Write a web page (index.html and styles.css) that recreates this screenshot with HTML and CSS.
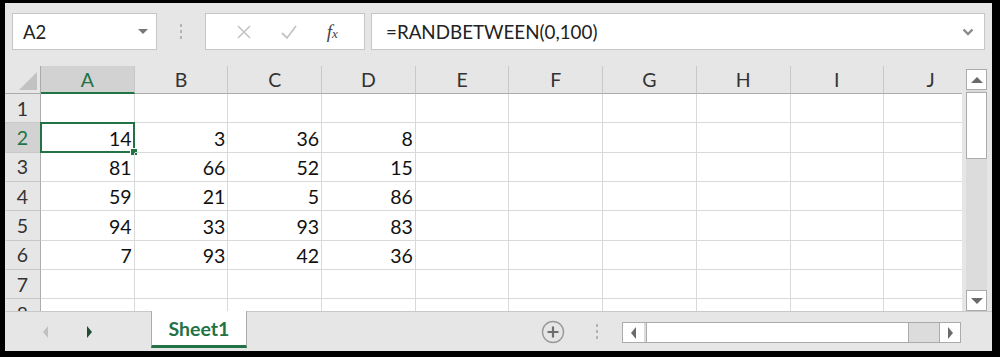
FILE: index.html
```html
<!DOCTYPE html>
<html lang="en">
<head>
  <meta charset="UTF-8">
  <title>Sheet1</title>
  <link rel="stylesheet" href="styles.css">
</head>
<body>
  <div class="frame">
    <!-- formula bar -->
    <div class="formula-bar">
      <div class="name-box">
        <span class="name">A2</span>
        <span class="drop"></span>
      </div>
      <div class="grip"><i></i><i></i><i></i></div>
      <div class="fx-box">
        <svg width="16" height="16" viewBox="0 0 16 16"><path d="M2 2 L14 14 M14 2 L2 14" stroke="#c4c4c4" stroke-width="1.6" fill="none"/></svg>
        <svg width="18" height="16" viewBox="0 0 18 16"><path d="M2 9 L7 14 L16 2" stroke="#c4c4c4" stroke-width="1.8" fill="none"/></svg>
        <span class="fx">f<sub>x</sub></span>
      </div>
      <div class="formula">
        <span>=RANDBETWEEN(0,100)</span>
        <svg width="12" height="8" viewBox="0 0 12 8"><path d="M1.5 1.5 L6 6 L10.5 1.5" stroke="#8a8a8a" stroke-width="2.4" fill="none"/></svg>
      </div>
    </div>

    <!-- grid + vertical scrollbar -->
    <div class="grid-area">
      <div class="sheet">
        <div class="corner"><span class="tri"></span></div>
        <div class="col-head sel">A</div>
        <div class="col-head">B</div>
        <div class="col-head">C</div>
        <div class="col-head">D</div>
        <div class="col-head">E</div>
        <div class="col-head">F</div>
        <div class="col-head">G</div>
        <div class="col-head">H</div>
        <div class="col-head">I</div>
        <div class="col-head">J</div>

        <div class="row-head">1</div>
        <div class="cell"></div><div class="cell"></div><div class="cell"></div><div class="cell"></div><div class="cell"></div><div class="cell"></div><div class="cell"></div><div class="cell"></div><div class="cell"></div><div class="cell"></div>

        <div class="row-head sel">2</div>
        <div class="cell active">14<span class="handle"></span></div><div class="cell">3</div><div class="cell">36</div><div class="cell">8</div><div class="cell"></div><div class="cell"></div><div class="cell"></div><div class="cell"></div><div class="cell"></div><div class="cell"></div>

        <div class="row-head">3</div>
        <div class="cell">81</div><div class="cell">66</div><div class="cell">52</div><div class="cell">15</div><div class="cell"></div><div class="cell"></div><div class="cell"></div><div class="cell"></div><div class="cell"></div><div class="cell"></div>

        <div class="row-head">4</div>
        <div class="cell">59</div><div class="cell">21</div><div class="cell">5</div><div class="cell">86</div><div class="cell"></div><div class="cell"></div><div class="cell"></div><div class="cell"></div><div class="cell"></div><div class="cell"></div>

        <div class="row-head">5</div>
        <div class="cell">94</div><div class="cell">33</div><div class="cell">93</div><div class="cell">83</div><div class="cell"></div><div class="cell"></div><div class="cell"></div><div class="cell"></div><div class="cell"></div><div class="cell"></div>

        <div class="row-head">6</div>
        <div class="cell">7</div><div class="cell">93</div><div class="cell">42</div><div class="cell">36</div><div class="cell"></div><div class="cell"></div><div class="cell"></div><div class="cell"></div><div class="cell"></div><div class="cell"></div>

        <div class="row-head">7</div>
        <div class="cell"></div><div class="cell"></div><div class="cell"></div><div class="cell"></div><div class="cell"></div><div class="cell"></div><div class="cell"></div><div class="cell"></div><div class="cell"></div><div class="cell"></div>

        <div class="row-head">8</div>
        <div class="cell"></div><div class="cell"></div><div class="cell"></div><div class="cell"></div><div class="cell"></div><div class="cell"></div><div class="cell"></div><div class="cell"></div><div class="cell"></div><div class="cell"></div>
      </div>

      <div class="vscroll">
        <div class="sbtn"><span class="arr up"></span></div>
        <div class="vthumb"></div>
        <div class="vtrack"></div>
        <div class="sbtn"><span class="arr down"></span></div>
      </div>
    </div>

    <!-- sheet tabs -->
    <div class="tab-bar">
      <div class="tab-nav">
        <span class="arr left dim"></span>
        <span class="arr right dark"></span>
      </div>
      <div class="tab">Sheet1</div>
      <div class="tab-tools">
        <div class="plus">
          <svg width="24" height="24" viewBox="0 0 24 24"><circle cx="12" cy="12" r="10.5" stroke="#9a9a9a" stroke-width="1.4" fill="none"/><path d="M12 6.5 V17.5 M6.5 12 H17.5" stroke="#6e6e6e" stroke-width="2.2"/></svg>
        </div>
        <div class="grip"><i></i><i></i><i></i></div>
      </div>
      <div class="hscroll">
        <div class="sbtn"><span class="arr left"></span></div>
        <div class="hthumb"></div>
        <div class="htrack"></div>
        <div class="sbtn"><span class="arr right"></span></div>
      </div>
    </div>
  </div>
</body>
</html>
```

FILE: styles.css
```css
body {
  margin: 0;
  background-color: #000;
  font-family: Lato, "Open Sans", sans-serif;
}

.frame {
  margin: 3px 8px 6px 5px;
  height: 348px;
  background-color: #e6e6e6;
  display: flex;
  flex-direction: column;
  overflow: hidden;
}

/* formula bar */
.formula-bar {
  display: flex;
  height: 37px;
  padding: 10px 7px 0 7px;
  margin-bottom: 16px;
}

.name-box {
  width: 145px;
  box-sizing: border-box;
  background-color: #fff;
  border: 1px solid #c6c6c6;
  display: flex;
  align-items: center;
  justify-content: space-between;
  padding: 0 8px 0 10px;
}

.name {
  font-size: 18.5px;
  color: #222;
}

.drop {
  width: 0;
  height: 0;
  border-left: 5px solid transparent;
  border-right: 5px solid transparent;
  border-top: 5px solid #777;
}

.grip {
  width: 48px;
  display: flex;
  flex-direction: column;
  align-items: center;
  justify-content: center;
  gap: 3px;
}

.grip i {
  display: block;
  width: 2px;
  height: 3px;
  background-color: #b4b4b4;
}

.fx-box {
  width: 160px;
  box-sizing: border-box;
  background-color: #fff;
  border: 1px solid #c6c6c6;
  display: flex;
  align-items: center;
  justify-content: space-around;
  padding: 0 12px 0 16px;
}

.fx {
  font-family: "Liberation Serif", serif;
  font-style: italic;
  font-size: 19px;
  color: #444;
}

.fx sub {
  font-size: 13px;
  vertical-align: 0;
}

.formula {
  flex: 1;
  margin-left: 6px;
  background-color: #fff;
  border: 1px solid #c6c6c6;
  display: flex;
  align-items: center;
  justify-content: space-between;
  padding: 0 10px 0 14px;
  font-size: 18.8px;
  color: #222;
}

/* grid */
.grid-area {
  display: flex;
  height: 245px;
}

.sheet {
  width: 957px;
  overflow: hidden;
  display: grid;
  grid-template-columns: 36px repeat(10, 93.7px);
  grid-template-rows: 28px repeat(8, 29.33px);
  font-size: 19.5px;
  color: #111;
  background-color: #fff;
}

.corner {
  background-color: #e6e6e6;
  border-right: 1px solid #ababab;
  border-bottom: 1px solid #ababab;
  position: relative;
}

.tri {
  position: absolute;
  right: 3px;
  bottom: 3px;
  width: 0;
  height: 0;
  border-left: 18px solid transparent;
  border-bottom: 18px solid #c2c2c2;
}

.col-head {
  background-color: #e6e6e6;
  border-right: 1px solid #c8c8c8;
  border-bottom: 1px solid #ababab;
  display: flex;
  align-items: center;
  justify-content: center;
  color: #333;
}

.col-head.sel {
  background-color: #d2d2d2;
  color: #217346;
  border-bottom: 2px solid #217346;
}

.row-head {
  background-color: #e6e6e6;
  border-right: 1px solid #ababab;
  border-bottom: 1px solid #c8c8c8;
  display: flex;
  align-items: center;
  justify-content: center;
  color: #333;
}

.row-head.sel {
  background-color: #d2d2d2;
  color: #217346;
}

.cell {
  border-right: 1px solid #d9d9d9;
  border-bottom: 1px solid #d9d9d9;
  display: flex;
  align-items: flex-end;
  justify-content: flex-end;
  padding: 0 2px 1px 0;
  line-height: 24px;
  position: relative;
}

.cell.active {
  border: 2px solid #217346;
  margin: -1px 0 0 -1px;
  padding: 0 1px 0 0;
}

.handle {
  position: absolute;
  right: -5px;
  bottom: -5px;
  width: 6px;
  height: 6px;
  background-color: #217346;
  border: 1px solid #fff;
}

/* scrollbars */
.vscroll {
  width: 21px;
  margin: 3px 0 0 4px;
  display: flex;
  flex-direction: column;
  background-color: #dcdcdc;
}

.sbtn {
  background-color: #fff;
  border: 1px solid #ababab;
  box-sizing: border-box;
  width: 21px;
  height: 21px;
  display: flex;
  align-items: center;
  justify-content: center;
}

.vthumb {
  height: 67px;
  margin-top: 2px;
  background-color: #fff;
  border: 1px solid #ababab;
  box-sizing: border-box;
}

.vtrack {
  flex: 1;
}

.arr {
  width: 0;
  height: 0;
}

.arr.up {
  border-left: 6px solid transparent;
  border-right: 6px solid transparent;
  border-bottom: 6px solid #6a6a6a;
}

.arr.down {
  border-left: 6px solid transparent;
  border-right: 6px solid transparent;
  border-top: 6px solid #6a6a6a;
}

.arr.left {
  border-top: 6px solid transparent;
  border-bottom: 6px solid transparent;
  border-right: 5px solid #6a6a6a;
}

.arr.right {
  border-top: 6px solid transparent;
  border-bottom: 6px solid transparent;
  border-left: 5px solid #6a6a6a;
}

.arr.dim {
  border-right-color: #c0c0c0;
}

.arr.dark {
  border-left-color: #1e4d33;
}

/* sheet tabs */
.tab-bar {
  flex: 1;
  display: flex;
  align-items: center;
  border-top: 1px solid #c8c8c8;
}

.tab-nav {
  width: 146px;
  display: flex;
  align-items: center;
  padding-left: 38px;
  gap: 39px;
  box-sizing: border-box;
}

.tab {
  align-self: flex-start;
  margin-top: -1px;
  width: 96px;
  height: 37px;
  box-sizing: border-box;
  background-color: #fff;
  border-left: 1px solid #ababab;
  border-right: 1px solid #ababab;
  border-bottom: 3px solid #217346;
  display: flex;
  align-items: center;
  justify-content: center;
  font-weight: bold;
  font-size: 19.5px;
  color: #217346;
}

.tab-tools {
  display: flex;
  align-items: center;
  margin-left: 294px;
}

.plus {
  width: 24px;
  height: 24px;
}

.tab-tools .grip {
  width: 64px;
  gap: 3px;
  margin-right: -7px;
}

.hscroll {
  width: 339px;
  height: 21px;
  display: flex;
  background-color: #dcdcdc;
  border: 1px solid #ababab;
  box-sizing: border-box;
  margin-top: 2px;
}

.hscroll .sbtn {
  width: 21px;
  height: 19px;
  border: none;
}

.hscroll .sbtn:last-child {
  border-left: 1px solid #ababab;
}

.hthumb {
  width: 261px;
  margin-left: 2px;
  background-color: #fff;
  border-left: 1px solid #ababab;
  border-right: 1px solid #ababab;
}

.htrack {
  flex: 1;
}
```
